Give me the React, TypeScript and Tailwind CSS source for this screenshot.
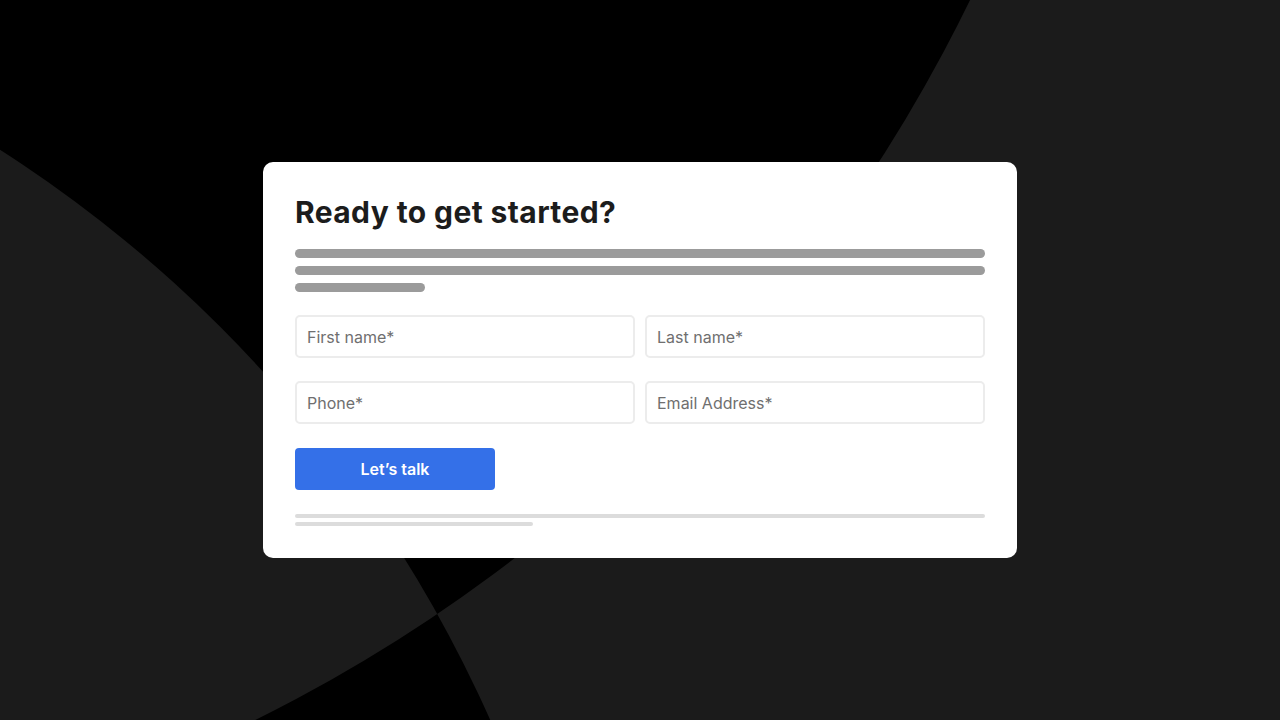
import React from "react";

function Backdrop(): JSX.Element {
  // two big overlapping circles, black where only one of them covers
  return (
    <svg className="absolute inset-0 h-full w-full" viewBox="0 0 1280 720" preserveAspectRatio="none">
      <rect width="1280" height="720" fill="#1b1b1b" />
      <path
        fillRule="evenodd"
        fill="#000000"
        d="M -2017 -689 a 1573 1573 0 1 0 3146 0 a 1573 1573 0 1 0 -3146 0 Z M -2011 1251 a 1307 1307 0 1 0 2614 0 a 1307 1307 0 1 0 -2614 0 Z"
      />
    </svg>
  );
}

function Field({ label }: { label: string }): JSX.Element {
  return (
    <input
      type="text"
      placeholder={label}
      className="h-[43px] w-full rounded-[5px] border-2 border-[#ececec] bg-white px-[10px] text-[16px] text-[#333] outline-none placeholder:text-[#6f6f6f]"
    />
  );
}

export default function App(): JSX.Element {
  return (
    <div className="relative flex h-[720px] w-[1280px] items-center justify-center overflow-hidden bg-black font-['Inter',sans-serif]">
      <Backdrop />
      <section className="relative w-[754px] rounded-[10px] bg-white p-8">
        <h1 className="text-[30px] font-bold leading-[36px] tracking-[0.4px] text-[#1c1c1c]">Ready to get started?</h1>

        <div className="mt-[19px] flex flex-col gap-2">
          <div className="h-[9px] w-full rounded-full bg-[#9b9b9b]" />
          <div className="h-[9px] w-full rounded-full bg-[#9b9b9b]" />
          <div className="h-[9px] w-[130px] rounded-full bg-[#9b9b9b]" />
        </div>

        <form className="mt-[23px] grid grid-cols-2 gap-x-[10px] gap-y-[23px]" onSubmit={(e) => e.preventDefault()}>
          <Field label="First name*" />
          <Field label="Last name*" />
          <Field label="Phone*" />
          <Field label="Email Address*" />
          <div className="col-span-2 mt-px">
            <button
              type="submit"
              className="h-[42px] w-[200px] rounded-[4px] bg-[#3470e8] text-[16px] font-semibold text-white"
            >
              Let’s talk
            </button>
          </div>
        </form>

        <div className="mt-6 flex flex-col gap-1">
          <div className="h-[4px] w-full rounded-full bg-[#dcdcdc]" />
          <div className="h-[4px] w-[238px] rounded-full bg-[#dcdcdc]" />
        </div>
      </section>
    </div>
  );
}
